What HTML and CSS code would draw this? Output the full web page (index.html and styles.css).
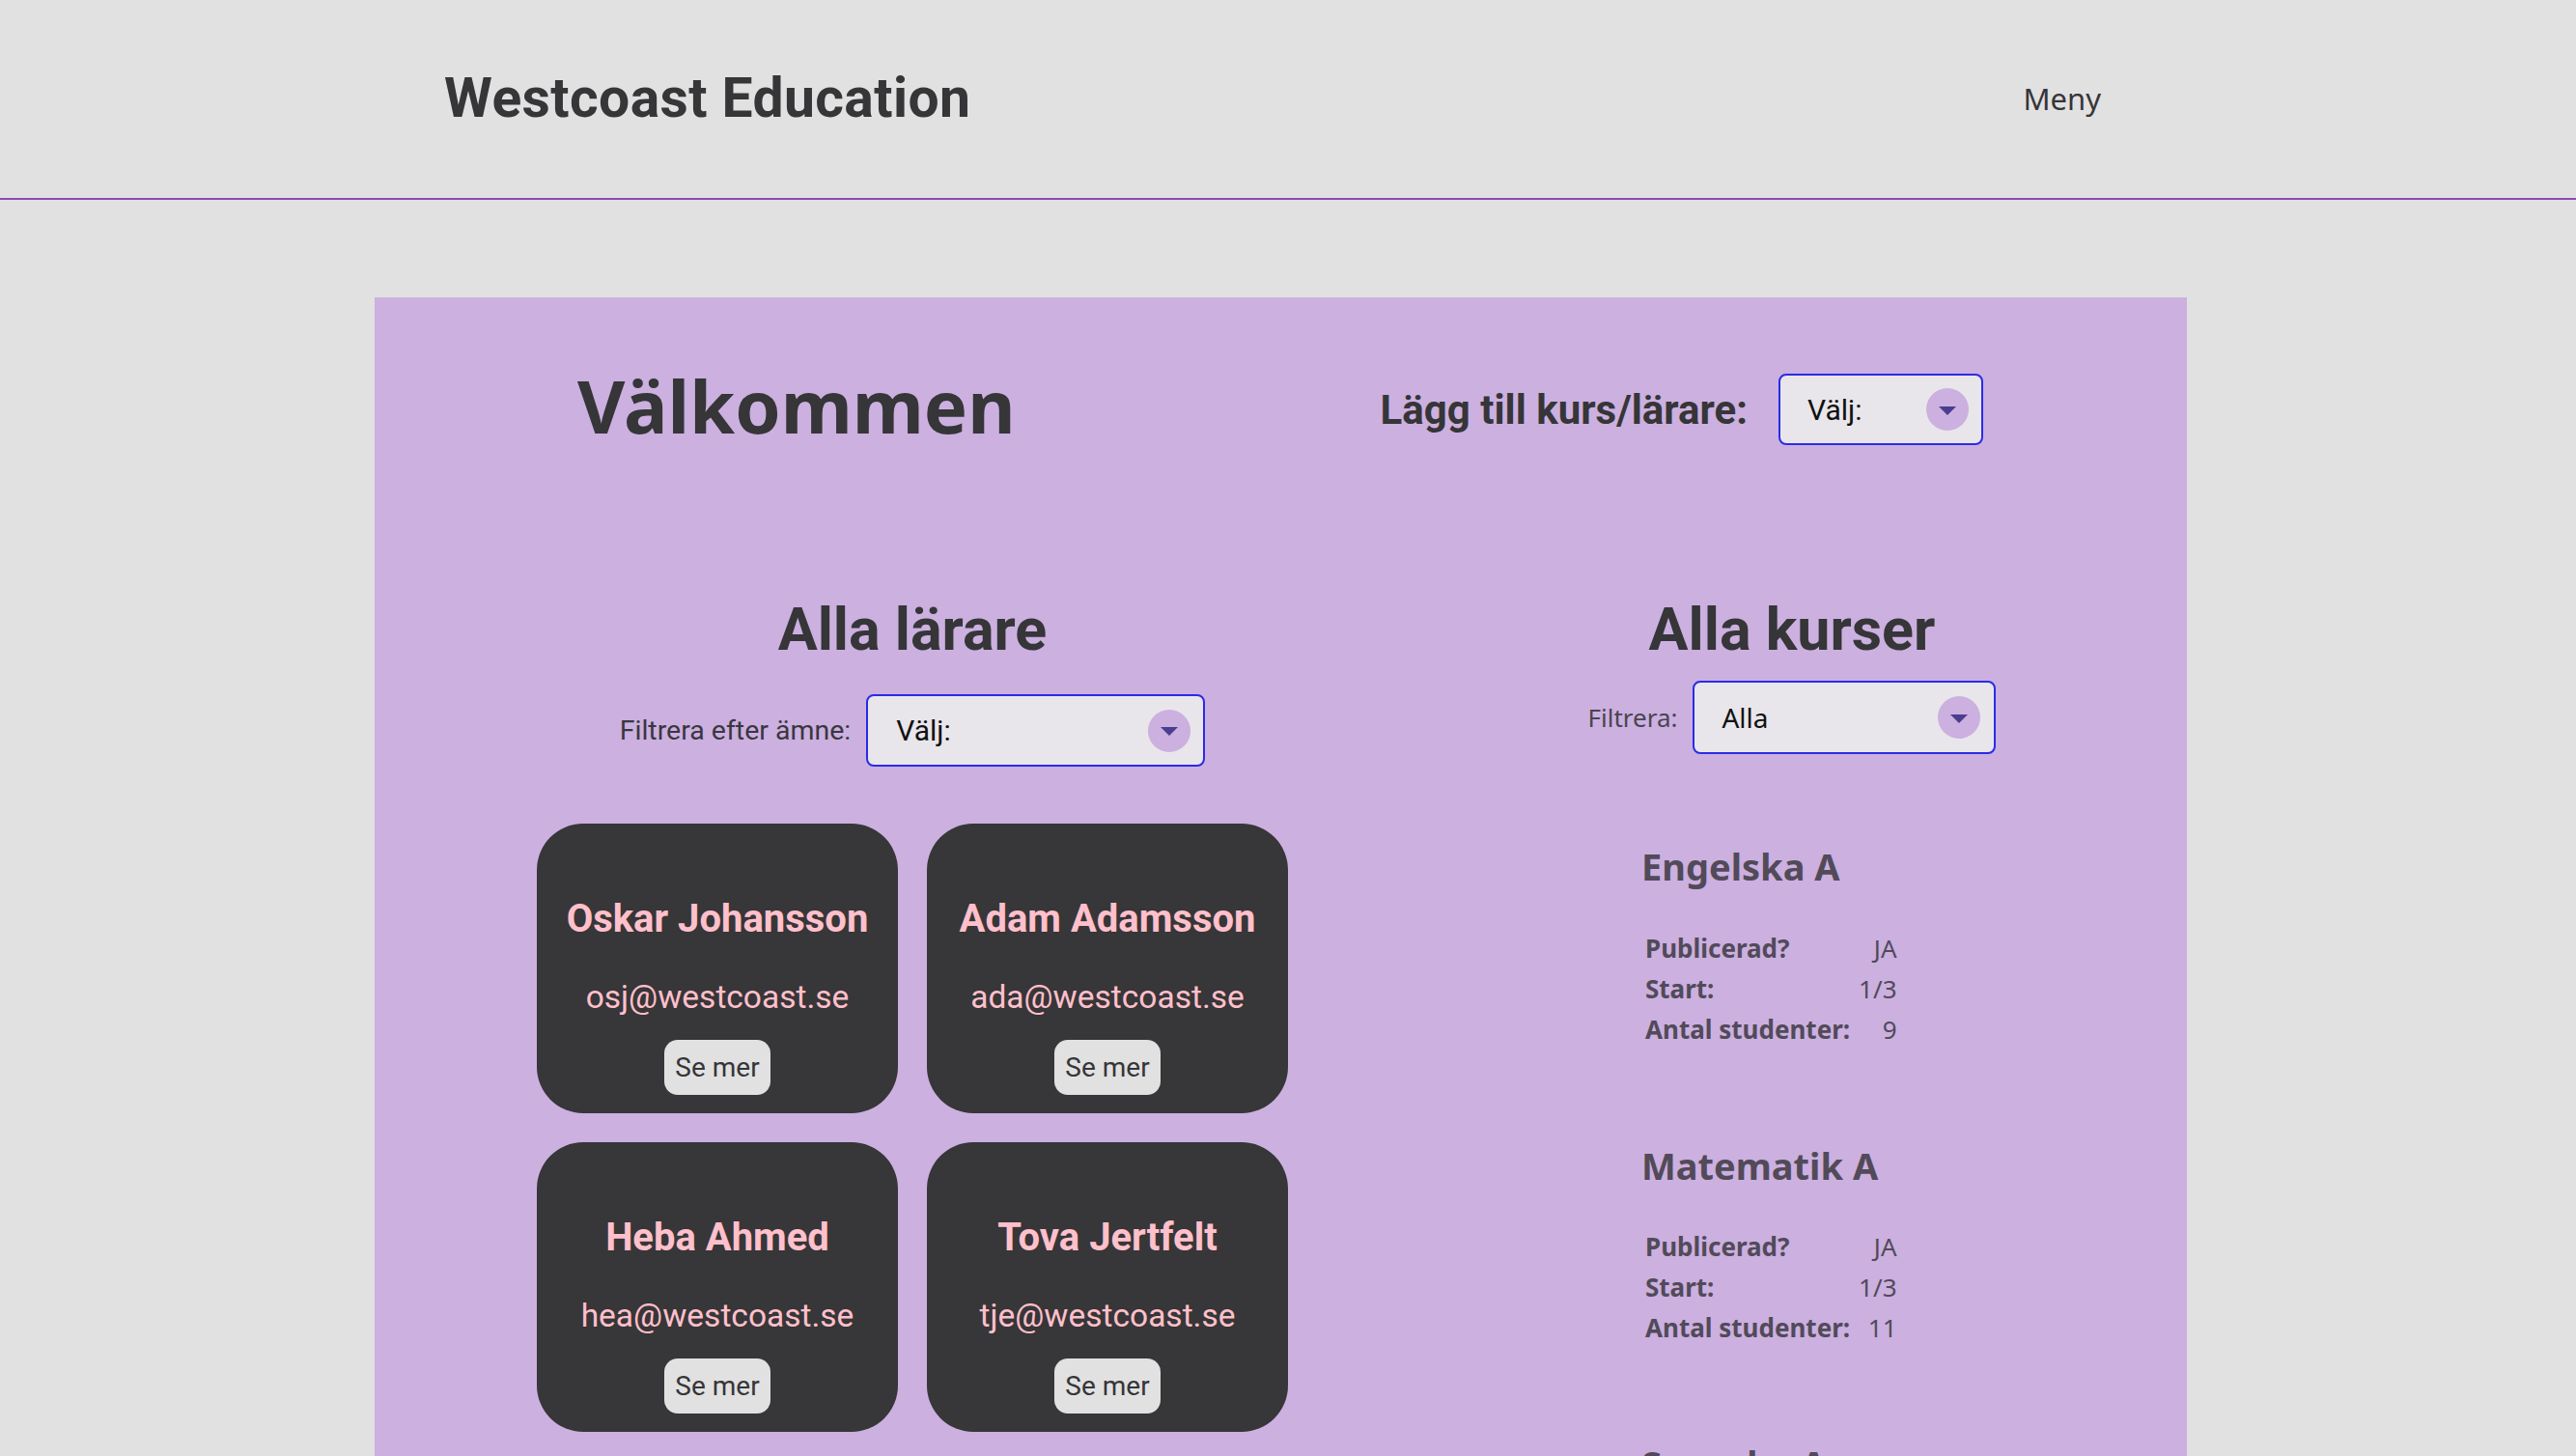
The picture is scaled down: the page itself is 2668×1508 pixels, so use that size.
FILE: index.html
```html
<!DOCTYPE html>
<html lang="sv">
<head>
<meta charset="utf-8">
<title>Westcoast Education</title>
<link rel="stylesheet" href="styles.css">
</head>
<body>
<header class="site-header">
  <div class="brand">Westcoast Education</div>
  <nav class="nav">Meny</nav>
</header>

<main class="panel">
  <section class="top-row">
    <h1 class="welcome">Välkommen</h1>
    <div class="add-group">
      <span class="add-label">Lägg till kurs/lärare:</span>
      <div class="select select-add">
        <span class="select-text cond">Välj:</span>
        <span class="select-btn"><span class="tri"></span></span>
      </div>
    </div>
  </section>

  <section class="columns">
    <div class="col col-teachers">
      <h2 class="col-title">Alla lärare</h2>
      <div class="filter-row">
        <span class="filter-label cond">Filtrera efter ämne:</span>
        <div class="select select-teach">
          <span class="select-text cond">Välj:</span>
          <span class="select-btn"><span class="tri"></span></span>
        </div>
      </div>
      <div class="cards">
        <article class="card">
          <h3 class="card-name">Oskar Johansson</h3>
          <p class="card-mail">osj@westcoast.se</p>
          <button class="card-btn">Se mer</button>
        </article>
        <article class="card">
          <h3 class="card-name">Adam Adamsson</h3>
          <p class="card-mail">ada@westcoast.se</p>
          <button class="card-btn">Se mer</button>
        </article>
        <article class="card">
          <h3 class="card-name">Heba Ahmed</h3>
          <p class="card-mail">hea@westcoast.se</p>
          <button class="card-btn">Se mer</button>
        </article>
        <article class="card">
          <h3 class="card-name">Tova Jertfelt</h3>
          <p class="card-mail">tje@westcoast.se</p>
          <button class="card-btn">Se mer</button>
        </article>
      </div>
    </div>

    <div class="col col-courses">
      <h2 class="col-title">Alla kurser</h2>
      <div class="filter-row filter-row-courses">
        <span class="filter-label sans">Filtrera:</span>
        <div class="select select-course">
          <span class="select-text sans">Alla</span>
          <span class="select-btn"><span class="tri"></span></span>
        </div>
      </div>
      <div class="course-list">
        <div class="course">
          <h3 class="course-name">Engelska A</h3>
          <table class="course-info">
            <tr><th>Publicerad?</th><td>JA</td></tr>
            <tr><th>Start:</th><td>1/3</td></tr>
            <tr><th>Antal studenter:</th><td>9</td></tr>
          </table>
        </div>
        <div class="course">
          <h3 class="course-name">Matematik A</h3>
          <table class="course-info">
            <tr><th>Publicerad?</th><td>JA</td></tr>
            <tr><th>Start:</th><td>1/3</td></tr>
            <tr><th>Antal studenter:</th><td>11</td></tr>
          </table>
        </div>
        <div class="course">
          <h3 class="course-name">Svenska A</h3>
          <table class="course-info">
            <tr><th>Publicerad?</th><td>JA</td></tr>
            <tr><th>Start:</th><td>1/3</td></tr>
            <tr><th>Antal studenter:</th><td>14</td></tr>
          </table>
        </div>
      </div>
    </div>
  </section>
</main>
</body>
</html>
```

FILE: styles.css
```css
* { box-sizing: border-box; }

html, body {
  margin: 0;
  padding: 0;
  background: #e1e1e1;
  color: #363538;
  font-family: Roboto, "Liberation Sans", sans-serif;
}

body { height: 1508px; overflow: hidden; }

.site-header {
  height: 207px;
  display: flex;
  align-items: center;
  justify-content: space-between;
  padding: 0 492px 0 460px;
  border-bottom: 2px solid #9048b8;
}

.brand {
  font-family: Roboto, sans-serif;
  font-weight: 700;
  font-size: 57px;
  letter-spacing: 0.4px;
  color: #363538;
  margin-top: -2px;
}

.nav {
  font-family: "Noto Sans", sans-serif;
  font-size: 31px;
  color: #363538;
  margin-top: -2px;
}

.panel {
  margin: 101px 0 0 388px;
  width: 1877px;
  height: 1300px;
  background: #cbb0e0;
}

.top-row {
  display: flex;
  align-items: center;
  justify-content: space-between;
  padding: 78px 211px 0 210px;
}

.welcome {
  margin: 0;
  font-family: "Noto Sans", sans-serif;
  font-weight: 700;
  font-size: 76px;
  line-height: 1;
  color: #363538;
  position: relative;
  top: -4px;
}

.add-group {
  display: flex;
  align-items: center;
  gap: 32px;
}

.add-label {
  font-family: Roboto, sans-serif;
  font-weight: 700;
  font-size: 42px;
  color: #363538;
}

.select {
  display: flex;
  align-items: center;
  justify-content: space-between;
  background: #e8e6eb;
  border: 2px solid #2b2be6;
  border-radius: 8px;
  padding: 0 13px 0 28px;
}

.select-add { width: 212px; height: 74px; }
.select-teach { width: 351px; height: 75px; padding-left: 29px; }
.select-course { width: 314px; height: 76px; padding-left: 28px; padding-right: 14px; }

.select-text { color: #111; }
.select-text.cond { font-family: Roboto, sans-serif; font-size: 30px; }
.select-text.sans { font-family: "Noto Sans", sans-serif; font-size: 28px; }

.select-btn {
  width: 44px;
  height: 44px;
  border-radius: 50%;
  background: #cbb0e0;
  display: flex;
  align-items: center;
  justify-content: center;
  flex: none;
}

.tri {
  width: 0;
  height: 0;
  border-left: 9px solid transparent;
  border-right: 9px solid transparent;
  border-top: 9px solid #4b3d8f;
  margin-top: 2px;
}

.columns {
  display: grid;
  grid-template-columns: 1114px 708px;
  margin-top: 154px;
}

.col-title {
  margin: 0;
  text-align: center;
  font-family: Roboto, sans-serif;
  font-weight: 700;
  font-size: 61px;
  line-height: 72px;
  color: #363538;
}

.filter-row {
  display: flex;
  align-items: center;
  justify-content: center;
  gap: 16px;
  margin-top: 31px;
}

.filter-row-courses { margin-top: 17px; }

.filter-label { color: #3b3640; }
.filter-label.cond { font-family: Roboto, sans-serif; font-size: 28.5px; }
.filter-label.sans { font-family: "Noto Sans", sans-serif; font-size: 26px; color: #4a4450; }

.cards {
  display: grid;
  grid-template-columns: 374px 374px;
  justify-content: center;
  gap: 30px;
  margin-top: 59px;
}

.card {
  height: 300px;
  background: #373638;
  border-radius: 48px;
  display: flex;
  flex-direction: column;
  align-items: center;
  padding: 75px 0 18px;
}

.card-name {
  margin: 0;
  font-family: Roboto, sans-serif;
  font-weight: 700;
  font-size: 40px;
  line-height: 48px;
  color: #ffc0cb;
  white-space: nowrap;
}

.card-mail {
  margin: 37px 0 0;
  font-family: Roboto, sans-serif;
  font-size: 33.5px;
  line-height: 40px;
  color: #ffc0cb;
}

.card-btn {
  margin-top: 24px;
  height: 57px;
  padding: 0 11px;
  border: none;
  border-radius: 14px;
  background: #e1e1e1;
  color: #363538;
  font-family: Roboto, sans-serif;
  font-size: 28px;
}

.course-list {
  padding-left: 198px;
  margin-top: 94px;
}

.course { margin-bottom: 98px; color: #524a59; }

.course-name {
  margin: 0 0 40px;
  font-family: "Noto Sans", sans-serif;
  font-weight: 700;
  font-size: 38px;
  line-height: 1.2;
  color: #524a59;
}

.course-info {
  border-collapse: collapse;
  margin-left: 4px;
  font-family: "Noto Sans", sans-serif;
  font-size: 26px;
  line-height: 42px;
}

.course-info th {
  text-align: left;
  font-weight: 700;
  padding: 0 9px 0 0;
}

.course-info td {
  text-align: right;
  font-weight: 400;
  padding: 0;
}
```
